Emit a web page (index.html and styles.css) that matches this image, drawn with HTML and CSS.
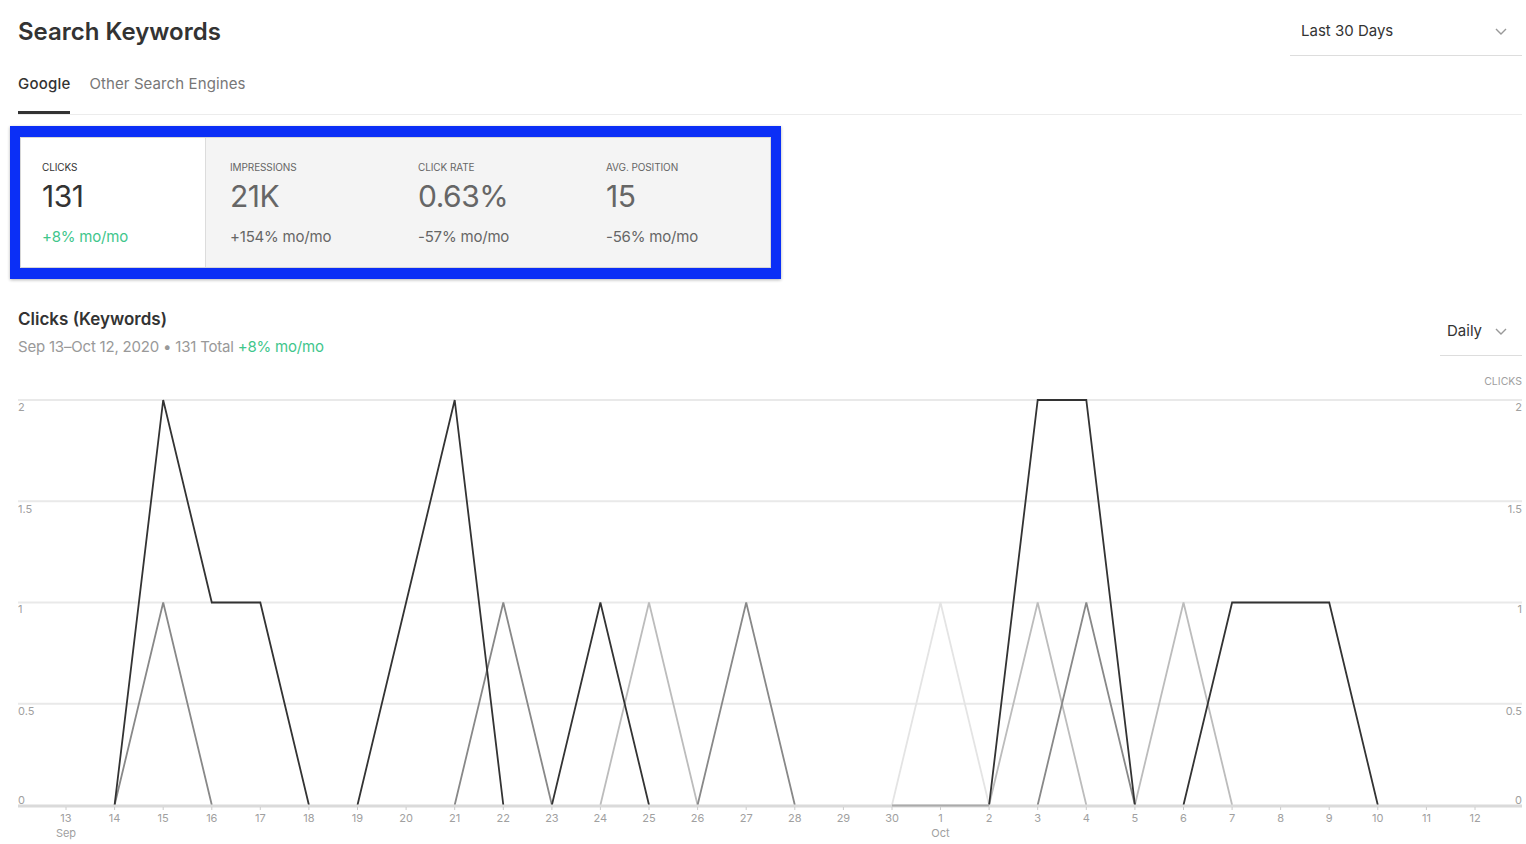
FILE: index.html
```html
<!DOCTYPE html>
<html lang="en">

<head>
    <meta charset="UTF-8">
    <meta name="viewport" content="width=device-width, initial-scale=1.0">
    <title>Search Keywords</title>
    <link rel="stylesheet" href="styles.css">
</head>

<body>
    <div class="page">
        <div class="page-header">
            <h1 class="page-title">Search Keywords</h1>
            <div class="select select-range">
                <span>Last 30 Days</span>
                <svg class="chevron" width="12" height="7" viewBox="0 0 12 7"><path d="M1 1l5 5 5-5" /></svg>
            </div>
        </div>

        <div class="tabs">
            <div class="tab active">Google</div>
            <div class="tab">Other Search Engines</div>
        </div>

        <div class="highlight">
            <div class="stats">
                <div class="stat stat-active">
                    <div class="stat-label">Clicks</div>
                    <div class="stat-value">131</div>
                    <div class="stat-change up">+8% mo/mo</div>
                </div>
                <div class="stat">
                    <div class="stat-label">Impressions</div>
                    <div class="stat-value">21K</div>
                    <div class="stat-change">+154% mo/mo</div>
                </div>
                <div class="stat">
                    <div class="stat-label">Click Rate</div>
                    <div class="stat-value">0.63%</div>
                    <div class="stat-change">-57% mo/mo</div>
                </div>
                <div class="stat">
                    <div class="stat-label">Avg. Position</div>
                    <div class="stat-value">15</div>
                    <div class="stat-change">-56% mo/mo</div>
                </div>
            </div>
        </div>

        <div class="chart-head">
            <div>
                <div class="chart-title">Clicks (Keywords)</div>
                <div class="chart-sub">Sep 13&ndash;Oct 12, 2020 &bull; 131 Total <span class="up">+8% mo/mo</span></div>
            </div>
            <div class="select select-interval">
                <span>Daily</span>
                <svg class="chevron" width="12" height="7" viewBox="0 0 12 7"><path d="M1 1l5 5 5-5" /></svg>
            </div>
        </div>

        <svg class="chart" width="1504" height="484" viewBox="18 360 1504 484">
            <text class="axis-title" x="1522" y="385" text-anchor="end">CLICKS</text>

            <!-- grid -->
            <g class="grid">
                <line x1="18" y1="400" x2="1522" y2="400" />
                <line x1="18" y1="501.25" x2="1522" y2="501.25" />
                <line x1="18" y1="602.5" x2="1522" y2="602.5" />
                <line x1="18" y1="703.75" x2="1522" y2="703.75" />
            </g>
            <g class="y-labels">
                <text x="18" y="411">2</text>
                <text x="18" y="513">1.5</text>
                <text x="18" y="613">1</text>
                <text x="18" y="715">0.5</text>
                <text x="18" y="804">0</text>
            </g>
            <g class="y-labels" text-anchor="end">
                <text x="1522" y="411">2</text>
                <text x="1522" y="513">1.5</text>
                <text x="1522" y="613">1</text>
                <text x="1522" y="715">0.5</text>
                <text x="1522" y="804">0</text>
            </g>

            <!-- series -->
            <polyline class="s4" points="892,805 940.5,602.5 989.1,805" />
            <polyline class="s3" points="600.4,805 649,602.5 697.6,805" />
            <polyline class="s3" points="989.1,805 1037.7,602.5 1086.3,805" />
            <polyline class="s3" points="1134.9,805 1183.5,602.5 1232.1,805" />
            <polyline class="s2" points="114.6,805 163.2,602.5 211.8,805" />
            <polyline class="s2" points="454.7,805 503.3,602.5 551.9,805" />
            <polyline class="s2" points="697.6,805 746.2,602.5 794.8,805" />
            <polyline class="s2" points="1037.7,805 1086.3,602.5 1134.9,805" />
            <polyline class="s1" points="114.6,805 163.2,400 211.8,602.5 260.3,602.5 308.9,805" />
            <polyline class="s1" points="357.5,805 406.1,602.5 454.7,400 503.3,805" />
            <polyline class="s1" points="551.9,805 600.4,602.5 649,805" />
            <polyline class="s1" points="989.1,805 1037.7,400 1086.3,400 1134.9,805" />
            <polyline class="s1" points="1183.5,805 1232.1,602.5 1329.2,602.5 1377.8,805" />

            <!-- x axis -->
            <line class="axis" x1="18" y1="806" x2="1522" y2="806" />
            <line class="axis-dark" x1="892" y1="805.5" x2="989.1" y2="805.5" />
            <g class="ticks">
                <line x1="66" y1="807" x2="66" y2="810" />
                <line x1="114.6" y1="807" x2="114.6" y2="810" />
                <line x1="163.2" y1="807" x2="163.2" y2="810" />
                <line x1="211.8" y1="807" x2="211.8" y2="810" />
                <line x1="260.3" y1="807" x2="260.3" y2="810" />
                <line x1="308.9" y1="807" x2="308.9" y2="810" />
                <line x1="357.5" y1="807" x2="357.5" y2="810" />
                <line x1="406.1" y1="807" x2="406.1" y2="810" />
                <line x1="454.7" y1="807" x2="454.7" y2="810" />
                <line x1="503.3" y1="807" x2="503.3" y2="810" />
                <line x1="551.9" y1="807" x2="551.9" y2="810" />
                <line x1="600.4" y1="807" x2="600.4" y2="810" />
                <line x1="649" y1="807" x2="649" y2="810" />
                <line x1="697.6" y1="807" x2="697.6" y2="810" />
                <line x1="746.2" y1="807" x2="746.2" y2="810" />
                <line x1="794.8" y1="807" x2="794.8" y2="810" />
                <line x1="843.4" y1="807" x2="843.4" y2="810" />
                <line x1="892" y1="807" x2="892" y2="810" />
                <line x1="940.5" y1="807" x2="940.5" y2="810" />
                <line x1="989.1" y1="807" x2="989.1" y2="810" />
                <line x1="1037.7" y1="807" x2="1037.7" y2="810" />
                <line x1="1086.3" y1="807" x2="1086.3" y2="810" />
                <line x1="1134.9" y1="807" x2="1134.9" y2="810" />
                <line x1="1183.5" y1="807" x2="1183.5" y2="810" />
                <line x1="1232.1" y1="807" x2="1232.1" y2="810" />
                <line x1="1280.6" y1="807" x2="1280.6" y2="810" />
                <line x1="1329.2" y1="807" x2="1329.2" y2="810" />
                <line x1="1377.8" y1="807" x2="1377.8" y2="810" />
                <line x1="1426.4" y1="807" x2="1426.4" y2="810" />
                <line x1="1475" y1="807" x2="1475" y2="810" />
            </g>
            <g class="x-labels" text-anchor="middle">
                <text x="66" y="822">13</text>
                <text x="114.6" y="822">14</text>
                <text x="163.2" y="822">15</text>
                <text x="211.8" y="822">16</text>
                <text x="260.3" y="822">17</text>
                <text x="308.9" y="822">18</text>
                <text x="357.5" y="822">19</text>
                <text x="406.1" y="822">20</text>
                <text x="454.7" y="822">21</text>
                <text x="503.3" y="822">22</text>
                <text x="551.9" y="822">23</text>
                <text x="600.4" y="822">24</text>
                <text x="649" y="822">25</text>
                <text x="697.6" y="822">26</text>
                <text x="746.2" y="822">27</text>
                <text x="794.8" y="822">28</text>
                <text x="843.4" y="822">29</text>
                <text x="892" y="822">30</text>
                <text x="940.5" y="822">1</text>
                <text x="989.1" y="822">2</text>
                <text x="1037.7" y="822">3</text>
                <text x="1086.3" y="822">4</text>
                <text x="1134.9" y="822">5</text>
                <text x="1183.5" y="822">6</text>
                <text x="1232.1" y="822">7</text>
                <text x="1280.6" y="822">8</text>
                <text x="1329.2" y="822">9</text>
                <text x="1377.8" y="822">10</text>
                <text x="1426.4" y="822">11</text>
                <text x="1475" y="822">12</text>
                <text x="66" y="837">Sep</text>
                <text x="940.5" y="837">Oct</text>
            </g>
        </svg>
    </div>
</body>

</html>
```

FILE: styles.css
```css
body {
    margin: 0;
    font-family: Inter, "Open Sans", sans-serif;
    color: #333;
    background-color: #fff;
    overflow: hidden;
}

.page {
    padding: 0 4px 0 18px;
}

.page-header {
    display: flex;
    justify-content: space-between;
    align-items: flex-start;
}

.page-title {
    margin: 0;
    padding-top: 16px;
    font-size: 24px;
    line-height: 32px;
    font-weight: 600;
    color: #333;
}

.select {
    display: flex;
    justify-content: space-between;
    align-items: center;
    box-sizing: border-box;
    border-bottom: 1px solid #ddd;
    font-size: 15px;
    line-height: 22px;
    color: #333;
}

.select-range {
    width: 232px;
    padding: 20px 15px 13px 11px;
}

.select-interval {
    width: 82px;
    padding: 12px 15px 13px 7px;
}

.chevron path {
    fill: none;
    stroke: #999;
    stroke-width: 1.4;
}

.tabs {
    display: flex;
    gap: 19px;
    border-bottom: 1px solid #ececec;
}

.tab {
    padding: 18px 0 17px;
    font-size: 15px;
    line-height: 20px;
    color: #777;
    letter-spacing: 0.1px;
    border-bottom: 3px solid transparent;
}

.tab.active {
    color: #333;
    font-weight: 500;
    letter-spacing: 0.2px;
    border-bottom-color: #333;
}

.highlight {
    width: fit-content;
    margin: 11px 0 0 -8px;
    border-style: solid;
    border-color: #0b2ff6;
    border-width: 11px 10px;
    box-shadow: 0 1px 3px rgba(0, 0, 0, 0.3);
}

.stats {
    display: grid;
    grid-template-columns: 185px repeat(3, 188px);
    border: 1px solid #d6d6d6;
    background-color: #f4f4f4;
}

.stat {
    box-sizing: border-box;
    padding: 23px 16px 20px 24px;
    color: #666;
}

.stat-active {
    padding-left: 21px;
    background-color: #fff;
    border-right: 1px solid #dcdcdc;
    color: #333;
}

.stat-label {
    font-size: 10px;
    line-height: 12px;
    text-transform: uppercase;
    letter-spacing: -0.1px;
}

.stat-value {
    margin-top: 5px;
    font-size: 30px;
    line-height: 36px;
    letter-spacing: -0.5px;
}

.stat-change {
    margin-top: 13px;
    font-size: 15px;
    line-height: 20px;
    letter-spacing: -0.2px;
}

.up {
    color: #3fc68c;
}

.chart-head {
    display: flex;
    justify-content: space-between;
    align-items: flex-start;
    margin-top: 29px;
}

.chart-title {
    font-size: 17px;
    line-height: 22px;
    font-weight: 600;
    color: #333;
}

.chart-sub {
    margin-top: 7px;
    font-size: 15px;
    line-height: 20px;
    color: #999;
    letter-spacing: -0.2px;
}

.chart {
    display: block;
    margin-top: 3px;
    font-family: Inter, "Open Sans", sans-serif;
}

.chart text {
    fill: #a0a0a0;
    font-size: 11px;
}

.chart .axis-title {
    font-size: 10.5px;
}

.grid line {
    stroke: #e9e9e9;
    stroke-width: 2;
}

.axis {
    stroke: #dadada;
    stroke-width: 3;
}

.axis-dark {
    stroke: #aaa;
    stroke-width: 2;
}

.ticks line {
    stroke: #ccc;
    stroke-width: 1;
}

polyline {
    fill: none;
    stroke-width: 1.8;
    stroke-linejoin: miter;
}

.s1 {
    stroke: #333;
}

.s2 {
    stroke: #888;
}

.s3 {
    stroke: #bcbcbc;
}

.s4 {
    stroke: #e4e4e4;
}
```
